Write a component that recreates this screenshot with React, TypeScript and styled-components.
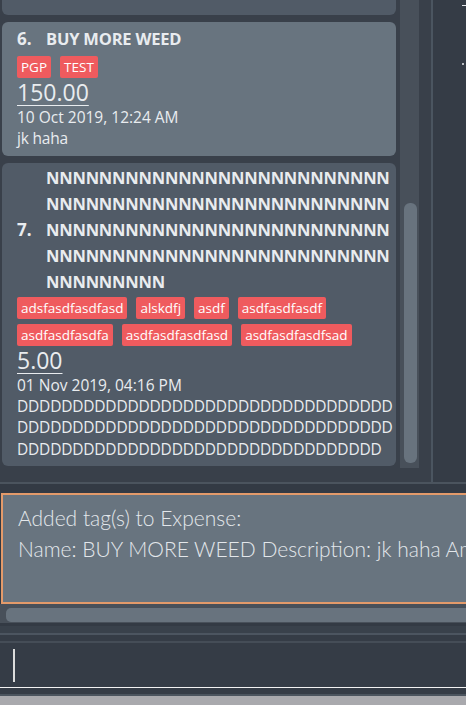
import React from 'react'
import styled, { createGlobalStyle } from 'styled-components'

interface Expense {
    index: number,
    name: string,
    tags: string[],
    amount: string,
    date: string,
    description: string,
    selected?: boolean
}

const expenses: Expense[] = [
    {
        index: 6,
        name: 'BUY MORE WEED',
        tags: ['PGP', 'TEST'],
        amount: '150.00',
        date: '10 Oct 2019, 12:24 AM',
        description: 'jk haha',
        selected: true
    },
    {
        index: 7,
        name: 'N'.repeat(113),
        tags: ['adsfasdfasdfasd', 'alskdfj', 'asdf', 'asdfasdfasdf', 'asdfasdfasdfa', 'asdfasdfasdfasd', 'asdfasdfasdfsad'],
        amount: '5.00',
        date: '01 Nov 2019, 04:16 PM',
        description: 'D'.repeat(101)
    }
]

const resultLines = [
    'Added tag(s) to Expense:',
    'Name: BUY MORE WEED Description: jk haha Amount: 150.00 Date: 10 Oct 2019, 12:24 AM Tags: [PGP][TEST]'
]

const GlobalStyle = createGlobalStyle`
    html, body {
        margin: 0;
        padding: 0;
        background: #363d47;
    }
    body {
        font-family: "Open Sans", "Noto Sans", sans-serif;
        overflow: hidden;
    }
`;

export default function App() {
    return (
        <>
            <GlobalStyle />
            <Window>
                <MainSplit>
                    <ListPane>
                        <ListView>
                            <CardStub />
                            {expenses.map((e) => (
                                <Card key={e.index} $selected={e.selected}>
                                    <TitleRow>
                                        <Index>{e.index}.</Index>
                                        <Name>{e.name}</Name>
                                    </TitleRow>
                                    <Tags>
                                        {e.tags.map((t) => <Tag key={t}>{t}</Tag>)}
                                    </Tags>
                                    <Amount>{e.amount}</Amount>
                                    <Detail>{e.date}</Detail>
                                    <Description>{e.description}</Description>
                                </Card>
                            ))}
                        </ListView>
                        <VScroll><VThumb /></VScroll>
                    </ListPane>
                    <SideDivider />
                    <SidePane>
                        <Dash />
                        <Dot />
                    </SidePane>
                </MainSplit>
                <ResultPane>
                    <ResultBox>
                        {resultLines.map((l) => <ResultLine key={l}>{l}</ResultLine>)}
                    </ResultBox>
                    <HScroll><HThumb /></HScroll>
                </ResultPane>
                <CommandPane>
                    <CommandFrame>
                        <CommandBox><Caret /></CommandBox>
                    </CommandFrame>
                </CommandPane>
                <StatusBar />
            </Window>
        </>
    )
}

const Window = styled.div`
    width: 466px;
    height: 705px;
    display: flex;
    flex-direction: column;
    background: #363d47;
    overflow: hidden;
`;
const MainSplit = styled.div`
    height: 482px;
    flex-shrink: 0;
    display: flex;
    border-bottom: 2px solid #4b545e;
`;
const ListPane = styled.div`
    width: 432px;
    display: flex;
    padding: 0 12px 14px 0;
    box-sizing: border-box;
    background: #39404a;
`;
const ListView = styled.div`
    flex: 1;
    display: flex;
    flex-direction: column;
    gap: 7px;
    padding: 0 4px 0 2px;
    overflow: hidden;
`;
const CardStub = styled.div`
    height: 15px;
    flex-shrink: 0;
    background: #515b67;
    border-radius: 0 0 6px 6px;
`;
const Card = styled.div<{ $selected?: boolean }>`
    flex-shrink: 0;
    background: ${(p) => (p.$selected ? '#68747f' : '#515b67')};
    border-radius: 6px;
    padding: 2px 2px 6px 15px;
    color: #e9ecef;
`;
const TitleRow = styled.div`
    display: flex;
    align-items: center;
    min-height: 30px;
`;
const Index = styled.span`
    width: 29px;
    flex-shrink: 0;
    font-size: 17px;
    font-weight: 700;
    line-height: 26px;
`;
const Name = styled.span`
    flex: 1;
    min-width: 0;
    font-size: 16.5px;
    font-weight: 700;
    letter-spacing: -0.2px;
    line-height: 26px;
    word-break: break-all;
`;
const Tags = styled.div`
    display: flex;
    flex-wrap: wrap;
    gap: 5px 9px;
    margin-top: 2px;
`;
const Tag = styled.span`
    height: 22px;
    line-height: 22px;
    padding: 0 4px;
    background: #ef5b5e;
    color: #fff;
    font-size: 13.5px;
    border-radius: 2px;
`;
const Amount = styled.div`
    font-size: 23px;
    line-height: 27px;
    text-decoration: underline;
    text-underline-offset: 4px;
    text-decoration-thickness: 1px;
    margin-top: 1px;
`;
const Detail = styled.div`
    font-size: 15.5px;
    line-height: 22px;
    word-break: break-all;
`;
const Description = styled(Detail)`
    letter-spacing: -0.2px;
    line-height: 21.5px;
`;
const VScroll = styled.div`
    width: 19px;
    flex-shrink: 0;
    display: flex;
    flex-direction: column;
    justify-content: flex-end;
    padding: 0 2px 5px 4px;
    box-sizing: border-box;
    background: #48505a;
`;
const VThumb = styled.div`
    height: 260px;
    border-radius: 6px;
    background: #68737e;
`;
const SideDivider = styled.div`
    width: 2px;
    background: #4b5560;
`;
const SidePane = styled.div`
    flex: 1;
    background: #353c46;
    padding: 5px 0 0 29px;
`;
const Dash = styled.div`
    width: 4px;
    height: 1px;
    background: #e6e9ec;
`;
const Dot = styled.div`
    width: 2px;
    height: 2px;
    margin-top: 57px;
    border-radius: 1px;
    background: #e6e9ec;
`;
const ResultPane = styled.div`
    flex-shrink: 0;
    padding: 9px 0 3px 0;
    background: #333a44;
`;
const ResultBox = styled.div`
    height: 111px;
    box-sizing: border-box;
    margin-left: 1px;
    border: 2px solid #e39a6a;
    border-right: none;
    background: #68747f;
    padding: 7px 0 0 15px;
    overflow: hidden;
`;
const ResultLine = styled.div`
    font-family: Lato, "Open Sans", sans-serif;
    font-size: 21px;
    font-weight: 300;
    line-height: 31px;
    color: #e3e7eb;
    white-space: pre;
`;
const HScroll = styled.div`
    height: 19px;
    box-sizing: border-box;
    padding: 4px 0 1px 6px;
    background: #48505a;
`;
const HThumb = styled.div`
    height: 14px;
    border-radius: 5px 0 0 5px;
    background: #68737e;
`;
const CommandPane = styled.div`
    flex-shrink: 0;
    padding-top: 7px;
    background: #39414b;
`;
const CommandFrame = styled.div`
    border-top: 2px solid #4c5560;
    padding-top: 6px;
    padding-bottom: 6px;
    background: #353c46;
`;
const CommandBox = styled.div`
    height: 47px;
    box-sizing: border-box;
    border-top: 2px solid #454d57;
    border-bottom: 1px solid #f2f2f2;
    padding: 6px 0 0 13px;
`;
const Caret = styled.div`
    width: 2px;
    height: 33px;
    background: #dcdcdc;
`;
const StatusBar = styled.div`
    flex: 1;
    border-top: 2px solid #4b545e;
    background: #a9a9ad;
`;
